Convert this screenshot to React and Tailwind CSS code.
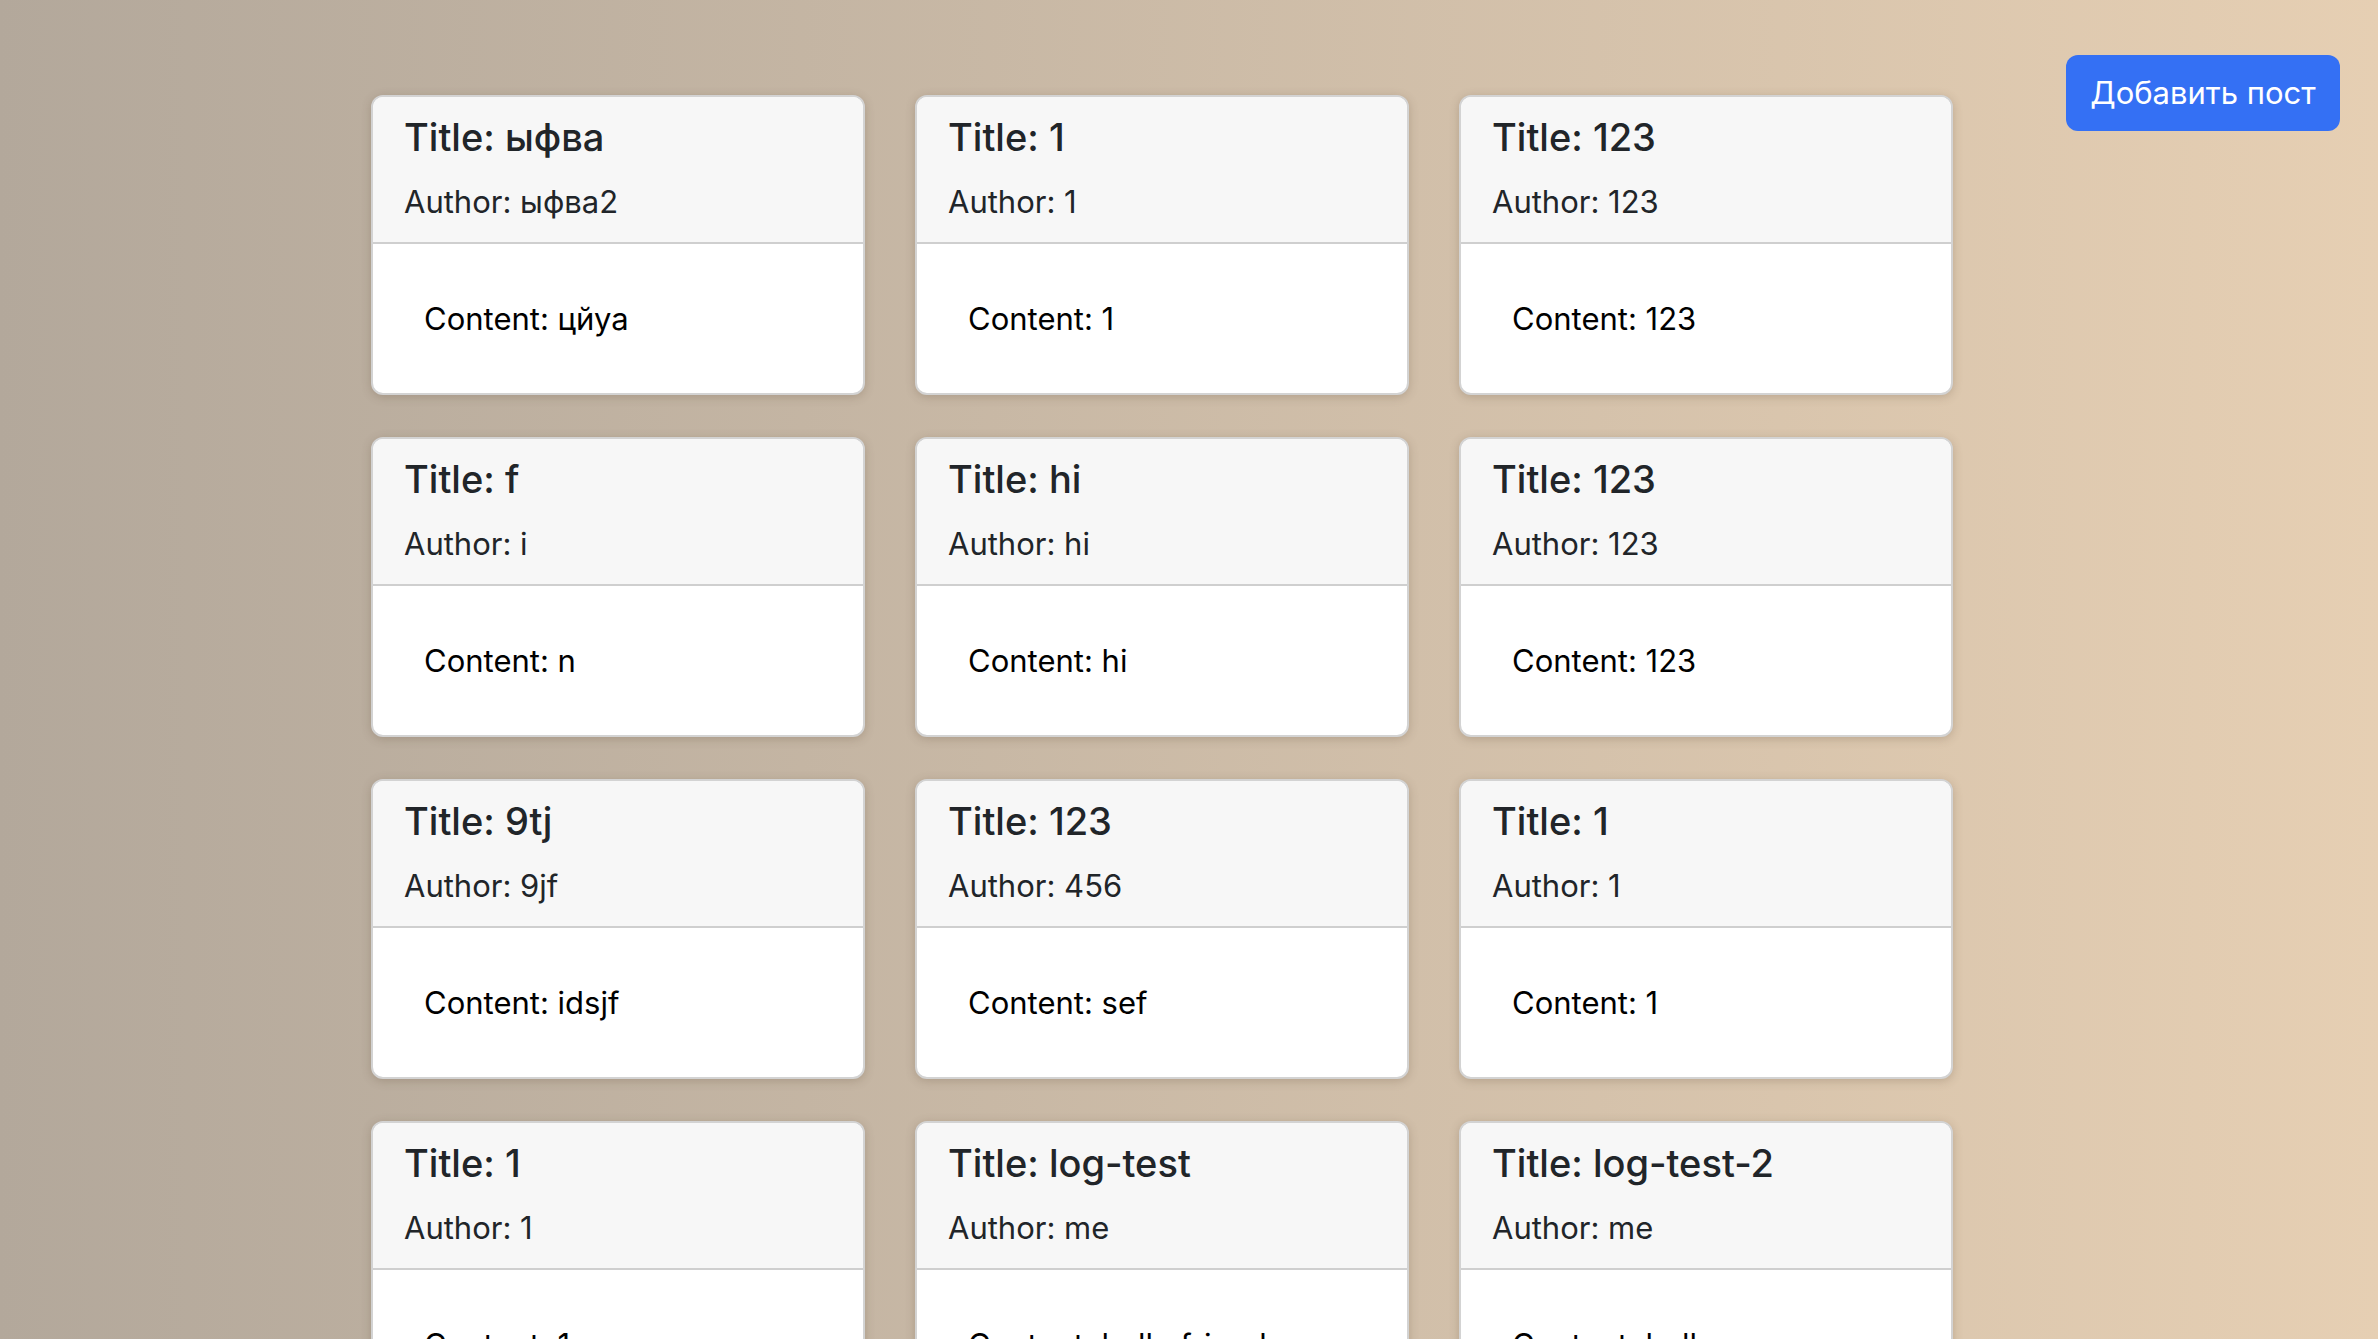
const posts = [
    { title: 'ыфва', author: 'ыфва2', content: 'цйуа' },
    { title: '1', author: '1', content: '1' },
    { title: '123', author: '123', content: '123' },
    { title: 'f', author: 'i', content: 'n' },
    { title: 'hi', author: 'hi', content: 'hi' },
    { title: '123', author: '123', content: '123' },
    { title: '9tj', author: '9jf', content: 'idsjf' },
    { title: '123', author: '456', content: 'sef' },
    { title: '1', author: '1', content: '1' },
    { title: '1', author: '1', content: '1' },
    { title: 'log-test', author: 'me', content: 'hello friend' },
    { title: 'log-test-2', author: 'me', content: 'hello' },
];

const PostCard = ({ title, author, content }) => {
    return (
        <div className="w-[494px] h-[300px] rounded-[12px] border-2 border-[#d3d3d3] bg-white overflow-hidden shadow-[0_2px_10px_rgba(90,70,50,0.25)] flex flex-col">
            <div className="bg-[#f7f7f7] border-b-2 border-[#cfcfcf] pl-[31px] pt-[17px] pb-[22px]">
                <h5 className="text-[38px] leading-[47px] font-medium text-[#212529]">Title: {title}</h5>
                <h6 className="mt-[22px] text-[31px] leading-[37px] text-[#212529]">Author: {author}</h6>
            </div>
            <div className="flex-1 flex items-center pl-[51px]">
                <p className="text-[31px] leading-[36px] text-black">Content: {content}</p>
            </div>
        </div>
    );
};

export default function App() {
    return (
        <div className="min-h-screen flex items-start bg-linear-to-r from-[#b3a89b] to-[#e6cfb3] font-['Inter','Liberation_Sans',sans-serif]">
            <div className="ml-[371px] mt-[95px] pb-10 grid grid-cols-[repeat(3,494px)] gap-x-[50px] gap-y-[42px]">
                {posts.map((p, i) => (
                    <PostCard key={i} {...p} />
                ))}
            </div>
            <button className="ml-auto mr-[38px] mt-[55px] w-[274px] h-[76px] rounded-[12px] bg-[#3470f4] text-white text-[31px] flex items-center justify-center">
                Добавить пост
            </button>
        </div>
    );
}
